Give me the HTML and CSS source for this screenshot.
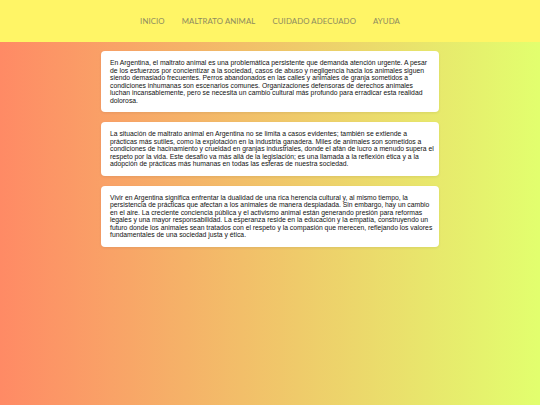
FILE: index.html
```html
<!DOCTYPE html>
<html lang="es">
<head>
<meta charset="utf-8">
<title>Maltrato animal en Argentina</title>
<link rel="stylesheet" href="styles.css">
</head>
<body>
<header class="topbar">
  <nav class="menu">
    <a class="menu-link" href="#">INICIO</a>
    <a class="menu-link" href="#">MALTRATO ANIMAL</a>
    <a class="menu-link" href="#">CUIDADO ADECUADO</a>
    <a class="menu-link" href="#">AYUDA</a>
  </nav>
</header>
<main class="content">
  <section class="card">
    <p>En Argentina, el maltrato animal es una problemática persistente que demanda atención urgente. A pesar de los esfuerzos por concientizar a la sociedad, casos de abuso y negligencia hacia los animales siguen siendo demasiado frecuentes. Perros abandonados en las calles y animales de granja sometidos a condiciones inhumanas son escenarios comunes. Organizaciones defensoras de derechos animales luchan incansablemente, pero se necesita un cambio cultural más profundo para erradicar esta realidad dolorosa.</p>
  </section>
  <section class="card">
    <p>La situación de maltrato animal en Argentina no se limita a casos evidentes; también se extiende a prácticas más sutiles, como la explotación en la industria ganadera. Miles de animales son sometidos a condiciones de hacinamiento y crueldad en granjas industriales, donde el afán de lucro a menudo supera el respeto por la vida. Este desafío va más allá de la legislación; es una llamada a la reflexión ética y a la adopción de prácticas más humanas en todas las esferas de nuestra sociedad.</p>
  </section>
  <section class="card">
    <p>Vivir en Argentina significa enfrentar la dualidad de una rica herencia cultural y, al mismo tiempo, la persistencia de prácticas que afectan a los animales de manera despiadada. Sin embargo, hay un cambio en el aire. La creciente conciencia pública y el activismo animal están generando presión para reformas legales y una mayor responsabilidad. La esperanza reside en la educación y la empatía, construyendo un futuro donde los animales sean tratados con el respeto y la compasión que merecen, reflejando los valores fundamentales de una sociedad justa y ética.</p>
  </section>
</main>
</body>
</html>
```

FILE: styles.css
```css
html, body {
  margin: 0;
  padding: 0;
}
body {
  min-height: 100vh;
  background: linear-gradient(to right, #ff8a65, #e2ff6e);
  font-family: "Liberation Sans", Arial, sans-serif;
}
.topbar {
  height: 42px;
  background: #fff566;
  display: flex;
  align-items: center;
  justify-content: center;
}
.menu {
  display: flex;
  gap: 17px;
}
.menu-link {
  font-family: "Lato", "Noto Sans", sans-serif;
  font-size: 7.8px;
  color: #8c8a60;
  text-decoration: none;
  letter-spacing: 0.1px;
}
.content {
  width: 338px;
  margin: 9px auto 0;
  display: flex;
  flex-direction: column;
  gap: 10px;
}
.card {
  background: #fff;
  border-radius: 4px;
  padding: 8px 5px 8px 9px;
  box-shadow: 0 1px 3px rgba(0, 0, 0, 0.08);
}
.card p {
  margin: 0;
  font-size: 6.8px;
  line-height: 7.5px;
  color: #111;
}
```
